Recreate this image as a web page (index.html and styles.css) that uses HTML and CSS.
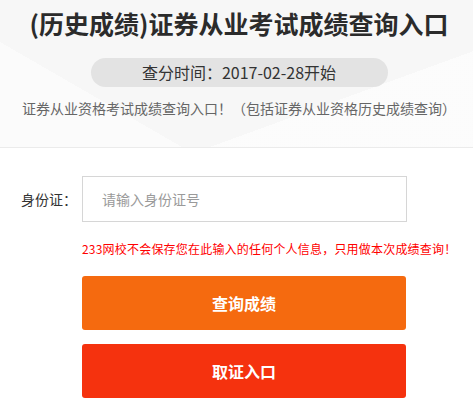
FILE: index.html
```html
<!DOCTYPE html>
<html lang="zh-CN">
<head>
    <meta charset="UTF-8">
    <meta name="viewport" content="width=device-width, initial-scale=1.0">
    <title>证券从业考试成绩查询入口</title>
    <link rel="stylesheet" href="styles.css">
</head>
<body>
    <div class="header">
        <h1 class="title">(历史成绩)证券从业考试成绩查询入口</h1>
        <div class="time-pill">查分时间：2017-02-28开始</div>
        <p class="subtitle">证券从业资格考试成绩查询入口！（包括证券从业资格历史成绩查询）</p>
    </div>

    <div class="form">
        <label class="form-label" for="idcard">身份证：</label>
        <input class="form-input" id="idcard" type="text" placeholder="请输入身份证号">
        <p class="form-tip">233网校不会保存您在此输入的任何个人信息，只用做本次成绩查询！</p>
        <button class="btn btn-query">查询成绩</button>
        <button class="btn btn-cert">取证入口</button>
    </div>
</body>
</html>
```

FILE: styles.css
```css
body {
    margin: 0;
    font-family: "Noto Sans CJK SC", "Liberation Sans", sans-serif;
    color: #333;
    background-color: #fff;
}
.header {
    padding: 6px 0 29px 5px;
    text-align: center;
    background-color: #f7f7f7;
    background-image:
        linear-gradient(160deg, transparent 70%, rgba(255, 255, 255, 0.6) 70%),
        linear-gradient(-150deg, transparent 75%, rgba(255, 255, 255, 0.5) 75%);
    border-bottom: 1px solid #ebebeb;
}
.title {
    margin: 0;
    font-size: 25px;
    line-height: 34px;
    font-weight: bold;
    color: #2b2b2b;
}
.time-pill {
    display: inline-block;
    width: 297px;
    height: 29px;
    margin-top: 18px;
    line-height: 29px;
    font-size: 16px;
    color: #333;
    background-color: #e3e3e3;
    border-radius: 15px;
}
.subtitle {
    margin: 11px 0 0;
    font-size: 14px;
    line-height: 20px;
    color: #666;
}
.form {
    display: grid;
    grid-template-columns: 82px 325px;
    padding-top: 28px;
}
.form-label {
    align-self: center;
    padding-right: 5px;
    text-align: right;
    font-size: 14px;
    color: #333;
}
.form-input {
    box-sizing: border-box;
    height: 46px;
    padding: 0 0 0 19px;
    border: 1px solid #d6d6d6;
    font-family: inherit;
    font-size: 14px;
    outline: none;
}
.form-input::placeholder {
    color: #9a9a9a;
}
.form-tip {
    grid-column: 2;
    margin: 18px 0 0;
    font-size: 12px;
    line-height: 18px;
    color: #f00;
    letter-spacing: 0.2px;
    white-space: nowrap;
}
.btn {
    grid-column: 2;
    width: 324px;
    height: 54px;
    border: none;
    border-radius: 3px;
    font-family: inherit;
    font-size: 16px;
    font-weight: bold;
    color: #fff;
    cursor: pointer;
}
.btn-query {
    margin-top: 18px;
    background-color: #f56a0f;
}
.btn-cert {
    margin-top: 14px;
    background-color: #f5320e;
}
```
